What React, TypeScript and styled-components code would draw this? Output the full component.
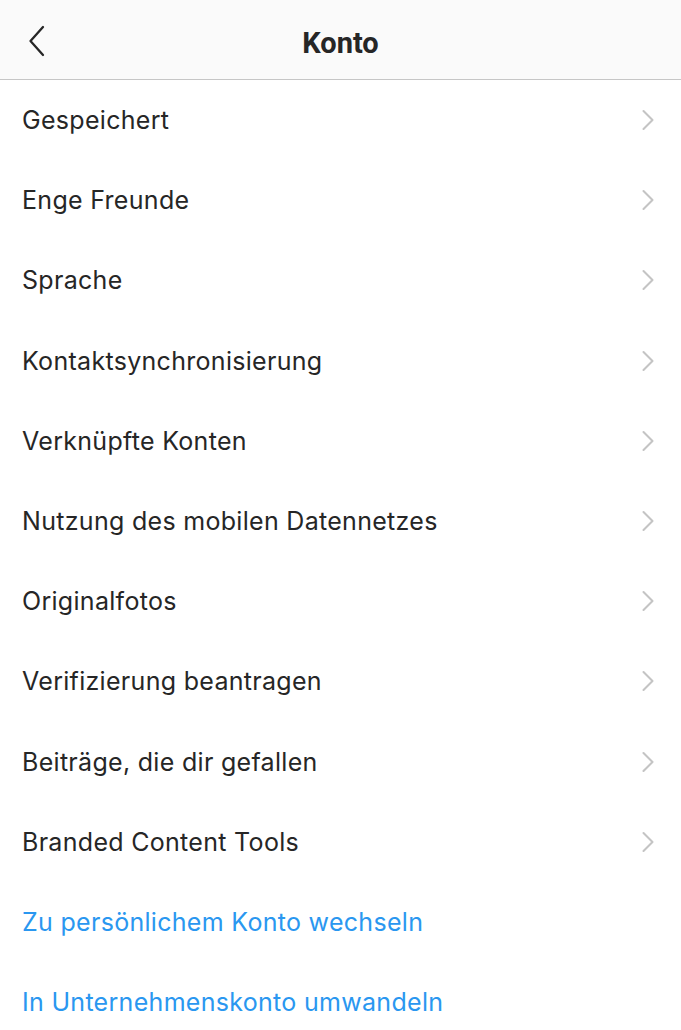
import React from "react";
import styled, { createGlobalStyle } from "styled-components";

const Global = createGlobalStyle`
  html, body { margin: 0; padding: 0; background: #ffffff; }
  body { font-family: "Inter", "Roboto", "Liberation Sans", sans-serif; -webkit-font-smoothing: antialiased; }
`;

const Page = styled.div`
  width: 681px;
  min-height: 1030px;
  background: #ffffff;
  display: flex;
  flex-direction: column;
`;

const Header = styled.header`
  height: 80px;
  box-sizing: border-box;
  background: #fafafa;
  border-bottom: 1px solid #c6c6c6;
  display: flex;
  align-items: center;
  justify-content: center;
  position: relative;
`;

const BackButton = styled.button`
  position: absolute;
  left: 22px;
  top: 22px;
  width: 28px;
  height: 38px;
  padding: 0;
  border: none;
  background: transparent;
  display: flex;
  align-items: center;
  justify-content: center;
`;

const Title = styled.h1`
  margin: 0;
  font-family: "Roboto", "Liberation Sans", sans-serif;
  font-weight: 700;
  font-size: 29px;
  color: #262626;
  letter-spacing: 0;
  transform: translateY(3px);
`;

const List = styled.ul`
  list-style: none;
  margin: 0;
  padding: 0;
`;

const Row = styled.li`
  height: 80.2px;
  display: flex;
  align-items: center;
  justify-content: space-between;
  padding: 0 26px 0 22px;
`;

const Label = styled.span<{ $link?: boolean }>`
  font-size: 25px;
  color: ${(p) => (p.$link ? "#2a97f0" : "#262626")};
  letter-spacing: 0.3px;
`;

const Chevron = () => (
  <svg width="14" height="22" viewBox="0 0 14 22" fill="none">
    <path d="M2.5 2 L11.5 11 L2.5 20" stroke="#c4c4c4" strokeWidth="2.1" strokeLinecap="round" strokeLinejoin="round" />
  </svg>
);

const items = [
  "Gespeichert",
  "Enge Freunde",
  "Sprache",
  "Kontaktsynchronisierung",
  "Verknüpfte Konten",
  "Nutzung des mobilen Datennetzes",
  "Originalfotos",
  "Verifizierung beantragen",
  "Beiträge, die dir gefallen",
  "Branded Content Tools",
];

const links = ["Zu persönlichem Konto wechseln", "In Unternehmenskonto umwandeln"];

export default function App() {
  return (
    <>
      <Global />
      <Page>
        <Header>
          <BackButton aria-label="Zurück">
            <svg width="20" height="32" viewBox="0 0 20 32" fill="none">
              <path d="M17 2 L4.5 16 L17 30" stroke="#262626" strokeWidth="2.3" strokeLinecap="round" strokeLinejoin="round" />
            </svg>
          </BackButton>
          <Title>Konto</Title>
        </Header>
        <List>
          {items.map((t) => (
            <Row key={t}>
              <Label>{t}</Label>
              <Chevron />
            </Row>
          ))}
          {links.map((t) => (
            <Row key={t}>
              <Label $link>{t}</Label>
            </Row>
          ))}
        </List>
      </Page>
    </>
  );
}
